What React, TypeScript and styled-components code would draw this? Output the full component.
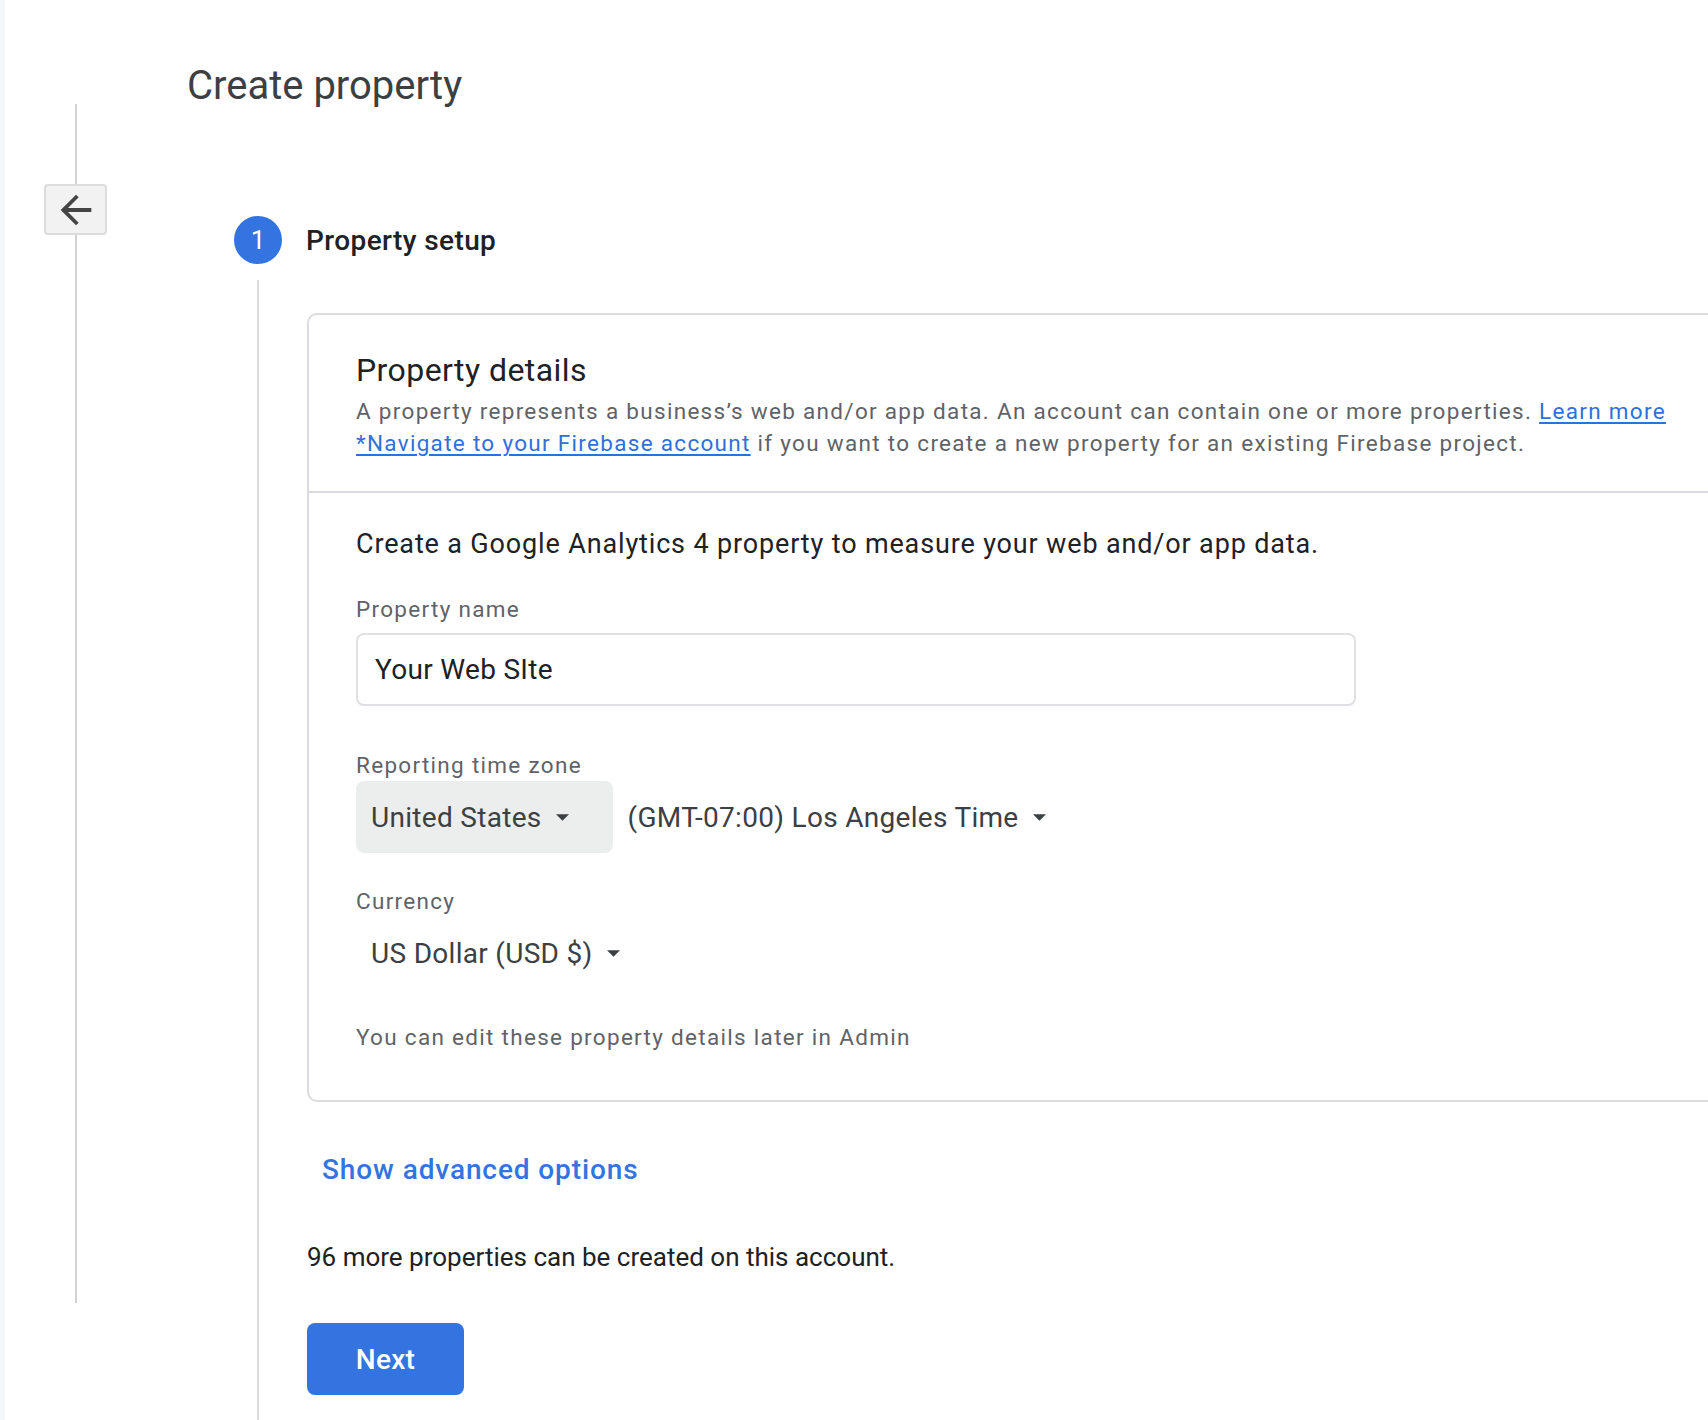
import React from 'react';
import styled, { createGlobalStyle } from 'styled-components';

const GlobalStyle = createGlobalStyle`
  html, body {
    margin: 0;
    padding: 0;
    background: #ffffff;
    overflow: hidden;
  }
  body {
    font-family: Roboto, "Noto Sans", Arial, sans-serif;
    -webkit-font-smoothing: antialiased;
  }
  * {
    box-sizing: border-box;
  }
`;

const Page = styled.div`
  display: flex;
  min-height: 1420px;
  background: #ffffff;
`;

const Strip = styled.div`
  width: 5px;
  flex-shrink: 0;
  background: #f6f7f9;
`;

const Rail = styled.nav`
  width: 63px;
  margin-left: 39px;
  padding-top: 104px;
  flex-shrink: 0;
  display: flex;
  flex-direction: column;
  align-items: center;
`;

const RailLine = styled.div<{ $h: number }>`
  width: 2px;
  height: ${(p) => p.$h}px;
  background: #d2d2d2;
`;

const BackButton = styled.button`
  width: 63px;
  height: 51px;
  padding: 0;
  display: flex;
  align-items: center;
  justify-content: center;
  background: #f2f2f2;
  border: 2px solid #dcdcdc;
  border-radius: 4px;
  color: #444444;
  cursor: pointer;
`;

const Content = styled.main`
  flex: 1;
  min-width: 0;
  margin-left: 80px;
  padding-top: 62px;
`;

const Title = styled.h1`
  margin: 0;
  font-size: 40px;
  line-height: 48px;
  font-weight: 400;
  color: #3c4043;
`;

const Step = styled.section`
  margin-left: 47px;
  margin-top: 106px;
`;

const StepHeader = styled.div`
  display: flex;
  align-items: center;
  gap: 24px;
  height: 48px;
`;

const StepNumber = styled.div`
  width: 48px;
  height: 48px;
  border-radius: 50%;
  background: #3474e0;
  color: #ffffff;
  display: flex;
  align-items: center;
  justify-content: center;
  font-size: 26px;
  font-weight: 400;
`;

const StepTitle = styled.h2`
  margin: 0;
  font-size: 28px;
  font-weight: 500;
  color: #202124;
  letter-spacing: 0.4px;
`;

const StepBody = styled.div`
  margin-left: 23px;
  margin-top: 16px;
  border-left: 2px solid #dadce0;
  padding: 33px 0 60px 48px;
`;

const Card = styled.div`
  width: 1500px;
  border: 2px solid #dadce0;
  border-radius: 10px;
  background: #ffffff;
`;

const CardHeader = styled.div`
  padding: 35px 47px 32px;
  border-bottom: 2px solid #dadce0;
`;

const CardTitle = styled.h3`
  margin: 0;
  font-size: 32px;
  line-height: 40px;
  font-weight: 400;
  color: #202124;
  letter-spacing: 0.43px;
`;

const Description = styled.p`
  margin: 5px 0 0;
  font-size: 22.5px;
  line-height: 32px;
  color: #5f6368;
  letter-spacing: 1.3px;
`;

const Link = styled.a`
  color: #2f6fde;
  text-decoration: underline;
  text-underline-offset: 3px;
`;

const CardBody = styled.div`
  padding: 33px 47px 49px;
`;

const Intro = styled.p`
  margin: 0;
  font-size: 27px;
  line-height: 36px;
  color: #202124;
  letter-spacing: 0.85px;
`;

const FieldLabel = styled.div<{ $gap: number }>`
  margin-top: ${(p) => p.$gap}px;
  font-size: 22.5px;
  line-height: 28px;
  color: #5f6368;
  letter-spacing: 1.3px;
`;

const TextInput = styled.input`
  display: block;
  margin-top: 10px;
  width: 1000px;
  height: 73px;
  padding: 0 17px;
  border: 2px solid #dfe1e5;
  border-radius: 8px;
  font-family: inherit;
  font-size: 28px;
  color: #202124;
  letter-spacing: 0.3px;
  outline: none;
`;

const SelectRow = styled.div<{ $gap: number }>`
  display: flex;
  align-items: center;
  margin-top: ${(p) => p.$gap}px;
`;

const Select = styled.div<{ $filled?: boolean }>`
  height: 72px;
  display: flex;
  align-items: center;
  gap: 14px;
  padding: 0 ${(p) => (p.$filled ? 44 : 15)}px 0 15px;
  border-radius: 8px;
  background: ${(p) => (p.$filled ? '#eceeee' : 'transparent')};
  font-size: 28px;
  color: #3c4043;
  letter-spacing: 0.3px;
  cursor: pointer;
`;

const Hint = styled.p`
  margin: 34px 0 0;
  font-size: 22.5px;
  line-height: 28px;
  color: #5f6368;
  letter-spacing: 1.3px;
`;

const TextButton = styled.button`
  margin-top: 50px;
  padding: 0 15px;
  height: 36px;
  border: none;
  background: none;
  font-family: inherit;
  font-size: 28px;
  line-height: 36px;
  font-weight: 500;
  color: #3474e0;
  letter-spacing: 0.9px;
  cursor: pointer;
`;

const Quota = styled.p`
  margin: 53px 0 0;
  font-size: 26px;
  line-height: 32px;
  color: #202124;
`;

const PrimaryButton = styled.button`
  display: block;
  margin-top: 50px;
  width: 157px;
  height: 72px;
  border: none;
  border-radius: 8px;
  background: #3474e0;
  color: #ffffff;
  font-family: inherit;
  font-size: 28px;
  font-weight: 500;
  letter-spacing: 0.3px;
  cursor: pointer;
`;

const ArrowBack = () => (
  <svg width="46" height="46" viewBox="0 0 24 24" fill="currentColor">
    <path d="M20 11H7.83l5.59-5.59L12 4l-8 8 8 8 1.41-1.41L7.83 13H20v-2z" />
  </svg>
);

const Caret = () => (
  <svg width="13" height="7" viewBox="0 0 10 5" fill="#3c4043">
    <path d="M0 0l5 5 5-5z" />
  </svg>
);

export default function App() {
  return (
    <>
      <GlobalStyle />
      <Page>
        <Strip />
        <Rail>
          <RailLine $h={80} />
          <BackButton aria-label="Back">
            <ArrowBack />
          </BackButton>
          <RailLine $h={1068} />
        </Rail>
        <Content>
          <Title>Create property</Title>
          <Step>
            <StepHeader>
              <StepNumber>1</StepNumber>
              <StepTitle>Property setup</StepTitle>
            </StepHeader>
            <StepBody>
              <Card>
                <CardHeader>
                  <CardTitle>Property details</CardTitle>
                  <Description>
                    A property represents a business’s web and/or app data. An account can contain one or more
                    properties. <Link href="#">Learn more</Link>
                    <br />
                    <Link href="#">*Navigate to your Firebase account</Link> if you want to create a new property
                    for an existing Firebase project.
                  </Description>
                </CardHeader>
                <CardBody>
                  <Intro>Create a Google Analytics 4 property to measure your web and/or app data.</Intro>
                  <FieldLabel $gap={33}>Property name</FieldLabel>
                  <TextInput defaultValue="Your Web SIte" />
                  <FieldLabel $gap={45}>Reporting time zone</FieldLabel>
                  <SelectRow $gap={2}>
                    <Select $filled>
                      United States <Caret />
                    </Select>
                    <Select>
                      (GMT-07:00) Los Angeles Time <Caret />
                    </Select>
                  </SelectRow>
                  <FieldLabel $gap={34}>Currency</FieldLabel>
                  <SelectRow $gap={2}>
                    <Select>
                      US Dollar (USD $) <Caret />
                    </Select>
                  </SelectRow>
                  <Hint>You can edit these property details later in Admin</Hint>
                </CardBody>
              </Card>
              <TextButton>Show advanced options</TextButton>
              <Quota>96 more properties can be created on this account.</Quota>
              <PrimaryButton>Next</PrimaryButton>
            </StepBody>
          </Step>
        </Content>
      </Page>
    </>
  );
}
